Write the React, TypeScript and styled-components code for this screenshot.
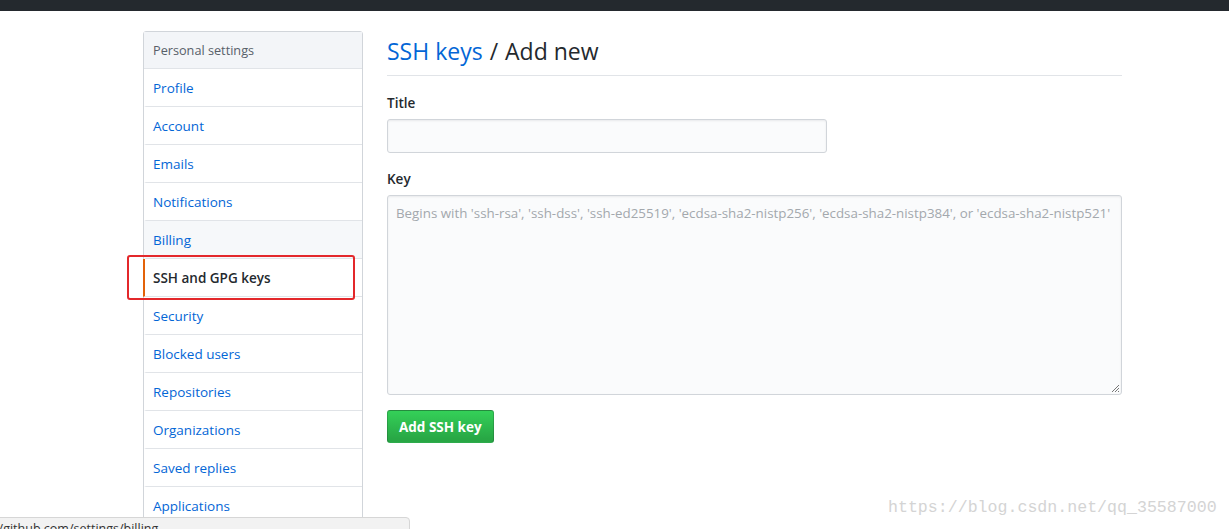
import React from "react";
import styled, { createGlobalStyle } from "styled-components";

const Global = createGlobalStyle`
  html, body { margin: 0; padding: 0; background: #fff; }
  body {
    font-family: "Open Sans", "Noto Sans", "Liberation Sans", sans-serif;
    font-size: 14px;
    color: #24292e;
    overflow: hidden;
    height: 529px;
  }
  * { box-sizing: border-box; }
`;

const Page = styled.div`
  position: relative;
  width: 1229px;
  height: 529px;
  overflow: hidden;
`;

const TopBar = styled.div`
  height: 11px;
  background: #24292e;
`;

const Container = styled.div`
  display: flex;
  gap: 24px;
  margin: 20px 0 0 143px;
  width: 980px;
`;

const Sidebar = styled.nav`
  width: 220px;
  flex: none;
  border: 1px solid #d1d5da;
  border-radius: 3px;
  background: #fff;
`;

const SideHeader = styled.div`
  height: 37px;
  padding: 0 9px;
  display: flex;
  align-items: center;
  background: #f3f5f8;
  color: #586069;
  font-size: 12.7px;
  border-bottom: 1px solid #e1e4e8;
`;

const SideItem = styled.div<{ $active?: boolean; $hover?: boolean }>`
  position: relative;
  height: 38px;
  display: flex;
  align-items: center;
  font-size: 13.5px;
  color: ${(p) => (p.$active ? "#24292e" : "#0366d6")};
  font-weight: ${(p) => (p.$active ? 600 : 400)};
  background: ${(p) => (p.$hover ? "#f6f8fa" : "#fff")};
  border-bottom: 1px solid #e1e4e8;
  border-left: 2px solid ${(p) => (p.$active ? "#e36209" : "transparent")};
  margin-left: ${(p) => (p.$active ? "-1px" : "0")};
  padding-left: ${(p) => (p.$active ? "8px" : "7px")};
  padding-right: 10px;
`;

const Highlight = styled.div`
  position: absolute;
  z-index: 2;
  left: -18px;
  top: -4px;
  width: 228px;
  height: 45px;
  border: 2px solid #e3282b;
  border-radius: 3px;
  pointer-events: none;
`;

const Main = styled.main`
  width: 735px;
  flex: none;
`;

const Subhead = styled.div`
  display: flex;
  align-items: baseline;
  font-size: 23px;
  line-height: 30px;
  padding: 5px 0 9px;
  border-bottom: 1px solid #e1e4e8;
  margin-bottom: 16px;
  font-weight: 400;
`;

const Crumb = styled.span`
  color: #0366d6;
`;

const Sep = styled.span`
  margin: 0 7px;
  color: #24292e;
`;

const Field = styled.div`
  margin-bottom: 15px;
`;

const Label = styled.label`
  display: block;
  font-weight: 600;
  font-size: 13.5px;
  line-height: 22px;
  margin-bottom: 5px;
`;

const TextInput = styled.div`
  width: 440px;
  height: 34px;
  background: #fafbfc;
  border: 1px solid #d1d5da;
  border-radius: 3px;
  box-shadow: inset 0 1px 2px rgba(27, 31, 35, 0.075);
`;

const TextArea = styled.div`
  position: relative;
  width: 735px;
  height: 200px;
  background: #fafbfc;
  border: 1px solid #d1d5da;
  border-radius: 3px;
  box-shadow: inset 0 1px 2px rgba(27, 31, 35, 0.075);
  padding: 7px 8px;
  color: #a3a8ad;
  font-size: 13.35px;
  line-height: 20px;
  white-space: nowrap;
`;

const Grip = styled.svg`
  position: absolute;
  right: 1px;
  bottom: 1px;
`;

const Button = styled.button`
  display: block;
  height: 33px;
  padding: 0 11px;
  font-family: inherit;
  font-size: 13.5px;
  font-weight: 700;
  color: #fff;
  background: linear-gradient(-180deg, #34d058 0%, #28a745 90%);
  border: 1px solid rgba(27, 31, 35, 0.2);
  border-radius: 3px;
`;

const StatusBar = styled.div`
  position: absolute;
  left: -1px;
  bottom: -6px;
  width: 411px;
  height: 18px;
  background: #f2f2f2;
  border: 1px solid #d6d6d6;
  border-top-right-radius: 4px;
  color: #333;
  font-size: 12.5px;
  line-height: 16px;
  white-space: nowrap;
  overflow: hidden;
`;

const StatusText = styled.span`
  display: inline-block;
  margin-left: -6px;
  margin-top: 3px;
`;

const Watermark = styled.div`
  position: absolute;
  left: 888px;
  top: 498px;
  font-family: "Liberation Mono", "DejaVu Sans Mono", monospace;
  font-size: 16.6px;
  color: #d4d4d4;
  white-space: nowrap;
`;

const items = [
  "Profile",
  "Account",
  "Emails",
  "Notifications",
  "Billing",
  "SSH and GPG keys",
  "Security",
  "Blocked users",
  "Repositories",
  "Organizations",
  "Saved replies",
  "Applications",
];

export default function App() {
  return (
    <Page>
      <Global />
      <TopBar />
      <Container>
        <Sidebar>
          <SideHeader>Personal settings</SideHeader>
          {items.map((it) => (
            <SideItem
              key={it}
              $active={it === "SSH and GPG keys"}
              $hover={it === "Billing"}
            >
              {it}
              {it === "SSH and GPG keys" && <Highlight />}
            </SideItem>
          ))}
        </Sidebar>
        <Main>
          <Subhead>
            <Crumb>SSH keys</Crumb>
            <Sep>/</Sep>
            <span>Add new</span>
          </Subhead>
          <Field>
            <Label>Title</Label>
            <TextInput />
          </Field>
          <Field>
            <Label>Key</Label>
            <TextArea>
              Begins with 'ssh-rsa', 'ssh-dss', 'ssh-ed25519', 'ecdsa-sha2-nistp256', 'ecdsa-sha2-nistp384', or 'ecdsa-sha2-nistp521'
              <Grip width="10" height="10" viewBox="0 0 10 10">
                <path d="M9 2 L2 9 M9 5 L5 9 M9 8 L8 9" stroke="#777" strokeWidth="1" />
              </Grip>
            </TextArea>
          </Field>
          <Button>Add SSH key</Button>
        </Main>
      </Container>
      <Watermark>https://blog.csdn.net/qq_35587000</Watermark>
      <StatusBar>
        <StatusText>//github.com/settings/billing</StatusText>
      </StatusBar>
    </Page>
  );
}
